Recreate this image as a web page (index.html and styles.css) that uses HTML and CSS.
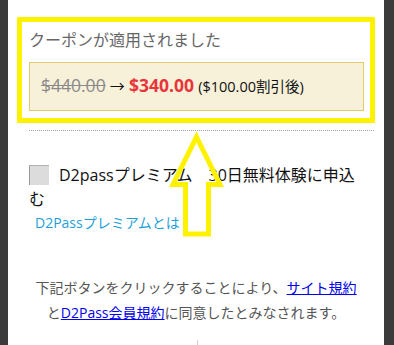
FILE: index.html
```html
<!DOCTYPE html>
<html lang="ja">
<head>
<meta charset="utf-8">
<link rel="stylesheet" href="styles.css">
</head>
<body>
<div class="panel">
  <div class="highlight">
    <div class="coupon-title">クーポンが適用されました</div>
    <div class="coupon-box">
      <span class="old-price">$440.00</span>
      <span class="arrow">→</span>
      <span class="new-price">$340.00</span>
      <span class="discount">($100.00割引後)</span>
    </div>
  </div>
  <div class="divider"></div>
  <div class="premium">
    <span class="checkbox"></span>D2passプレミアム　30日無料体験に申込む
  </div>
  <a class="premium-link" href="#">D2Passプレミアムとは</a>
  <p class="terms">下記ボタンをクリックすることにより、<a href="#">サイト規約</a><br>と<a href="#">D2Pass会員規約</a>に同意したとみなされます。</p>
  <div class="stub"></div>
  <svg class="pointer" width="394" height="345" viewBox="0 0 394 345">
    <polygon points="196.5,137 220,184.5 208.5,184.5 208.5,234 185.5,234 185.5,184.5 173,184.5" fill="none" stroke="#fff200" stroke-width="5" stroke-linejoin="miter"/>
  </svg>
</div>
</body>
</html>
```
FILE: styles.css
```css
html, body {
  margin: 0;
  padding: 0;
}
body {
  background: #3b3b3b;
  font-family: "Open Sans", "Noto Sans CJK JP", sans-serif;
  width: 394px;
  height: 345px;
  overflow: hidden;
}
.panel {
  margin: 0 10px 0 8px;
  background: #fff;
  height: 345px;
  padding-top: 17px;
  box-sizing: border-box;
  display: flow-root;
}
.highlight {
  margin: 0 9px;
  border: 5px solid #fff200;
  padding: 0 6px 7px 7px;
}
.coupon-title {
  margin-top: 7px;
  font-size: 16px;
  line-height: 22px;
  color: #666;
}
.coupon-box {
  margin-top: 11px;
  background: #f8f1da;
  border: 1px solid #e3cb6a;
  padding: 10px 11px 11px;
  line-height: 24px;
  white-space: nowrap;
}
.old-price {
  font-size: 17.5px;
  color: #8a8a8a;
  text-decoration: line-through;
}
.arrow {
  font-size: 15px;
  color: #111;
}
.new-price {
  font-size: 17.5px;
  font-weight: bold;
  color: #e8353b;
}
.discount {
  font-size: 14.5px;
  color: #111;
}
.divider {
  margin: 7px 10px 0 21px;
  border-top: 1px dotted #a0a0a0;
}
.premium {
  margin: 32px 16px 0 21px;
  font-size: 16px;
  line-height: 24px;
  color: #111;
}
.checkbox {
  display: inline-block;
  width: 19px;
  height: 19px;
  background: #dcdcdc;
  border-left: 1px solid #9a9a9a;
  border-top: 1px solid #b0b0b0;
  vertical-align: -4px;
  margin-right: 10px;
}
.premium-link {
  display: block;
  margin-left: 27px;
  font-size: 14px;
  line-height: 24px;
  color: #1f9fd8;
  text-decoration: none;
}
.terms {
  margin: 40px 10px 0;
  text-align: center;
  font-size: 14px;
  line-height: 25px;
  color: #555;
}
.terms a {
  color: #0000ee;
  text-decoration: underline;
}
.stub {
  margin: 15px auto 0;
  width: 1px;
  height: 10px;
  background: #d9c6d6;
  position: relative;
  left: 1px;
}
.pointer {
  position: absolute;
  left: 0;
  top: 0;
}
```
